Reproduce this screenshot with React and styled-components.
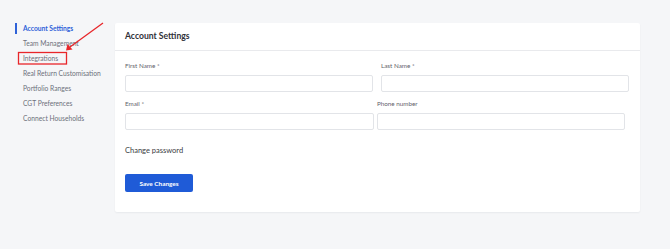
import React from "react"
import styled, { createGlobalStyle } from "styled-components"

const GlobalStyle = createGlobalStyle`
  html, body {
    margin: 0;
    padding: 0;
    background: #f5f6f8;
    font-family: Lato, "Open Sans", sans-serif;
  }
`

const Page = styled.div`
  position: relative;
  display: flex;
  align-items: flex-start;
  width: 670px;
  height: 249px;
  padding-right: 30px;
  box-sizing: border-box;
  overflow: hidden;
`

const Sidebar = styled.nav`
  flex-shrink: 0;
  width: 115px;
  padding: 21px 0 0 15px;
  box-sizing: border-box;
`

const NavItem = styled.div`
  position: relative;
  height: 15px;
  line-height: 15px;
  padding-left: 8px;
  font-size: 6.7px;
  white-space: nowrap;
  color: ${props => (props.active ? "#2f62d8" : "#6d717b")};
  font-weight: ${props => (props.active ? 700 : 400)};
  &::before {
    content: "";
    display: ${props => (props.active ? "block" : "none")};
    position: absolute;
    left: 0;
    top: 2px;
    width: 2px;
    height: 11px;
    background: #2f62d8;
  }
`

const Card = styled.section`
  flex: 1;
  margin-top: 23px;
  height: 189px;
  background: #fff;
  border-radius: 2px;
  box-shadow: 0 1px 2px rgba(20, 30, 50, 0.06);
`

const CardHeader = styled.header`
  height: 27px;
  line-height: 27px;
  padding-left: 10px;
  border-bottom: 1px solid #e9eaed;
  font-size: 8.6px;
  font-weight: 700;
  color: #2f3137;
`

const CardBody = styled.div`
  padding: 11px 11px 0 10px;
`

const FieldRow = styled.div`
  display: grid;
  grid-template-columns: ${props => props.cols};
  column-gap: ${props => props.gap}px;
  margin-bottom: 8px;
`

const Field = styled.label`
  display: flex;
  flex-direction: column;
  gap: 5px;
`

const Label = styled.span`
  font-size: 6.3px;
  line-height: 8px;
  color: #5f636c;
`

const Input = styled.div`
  height: 17px;
  box-sizing: border-box;
  border: 1px solid #e2e4e8;
  border-radius: 2px;
  background: #fff;
`

const LinkText = styled.div`
  margin-top: 15px;
  font-size: 7.5px;
  line-height: 12px;
  color: #3a3c42;
`

const SaveButton = styled.button`
  margin-top: 17px;
  width: 68px;
  height: 18px;
  border: none;
  border-radius: 2px;
  background: #1f5bd7;
  color: #fff;
  font-family: inherit;
  font-size: 6.4px;
  font-weight: 700;
  padding: 0;
  cursor: pointer;
`

const Annotation = styled.svg`
  position: absolute;
  left: 0;
  top: 0;
  pointer-events: none;
`

const navItems = [
  "Account Settings",
  "Team Management",
  "Integrations",
  "Real Return Customisation",
  "Portfolio Ranges",
  "CGT Preferences",
  "Connect Households",
]

export default function App() {
  return (
    <Page>
      <GlobalStyle />
      <Sidebar>
        {navItems.map((item, i) => (
          <NavItem key={item} active={i === 0}>
            {item}
          </NavItem>
        ))}
      </Sidebar>
      <Card>
        <CardHeader>Account Settings</CardHeader>
        <CardBody>
          <FieldRow cols="248px 248px" gap={8}>
            <Field>
              <Label>First Name *</Label>
              <Input />
            </Field>
            <Field>
              <Label>Last Name *</Label>
              <Input />
            </Field>
          </FieldRow>
          <FieldRow cols="249px 248px" gap={3}>
            <Field>
              <Label>Email *</Label>
              <Input />
            </Field>
            <Field>
              <Label>Phone number</Label>
              <Input />
            </Field>
          </FieldRow>
          <LinkText>Change password</LinkText>
          <SaveButton>Save Changes</SaveButton>
        </CardBody>
      </Card>
      <Annotation width="670" height="249">
        <rect x="18.5" y="52.5" width="48" height="11.5" fill="none" stroke="#e8262a" strokeWidth="1.3" />
        <line x1="103" y1="23" x2="70" y2="47" stroke="#e8262a" strokeWidth="1.2" />
        <polygon points="66,50.5 67.5,44 72.5,49.5" fill="#e8262a" />
      </Annotation>
    </Page>
  )
}
